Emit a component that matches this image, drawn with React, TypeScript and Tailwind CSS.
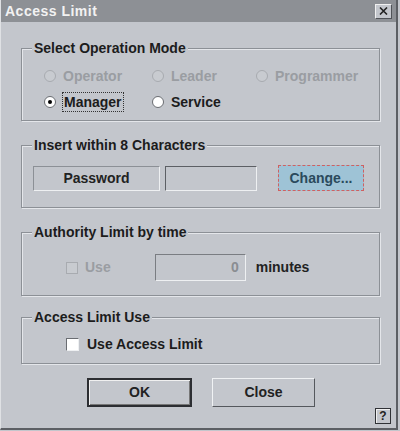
import React from 'react'

const font = { fontFamily: '"Liberation Sans", Arial, sans-serif' }

function Group({ title, className, children }: { title: string; className?: string; children: React.ReactNode }) {
  return (
    <div className={`relative border border-[#8c9096] shadow-[1px_1px_0_#e4e6ea,inset_1px_1px_0_#e4e6ea] ${className ?? ''}`}>
      <span className="absolute -top-[10px] left-[10px] bg-[#c3c6cc] px-[2px] text-[14px] font-bold leading-[18px] text-[#1c1c1c]">
        {title}
      </span>
      {children}
    </div>
  )
}

function Radio({ label, checked, disabled, focus }: { label: string; checked?: boolean; disabled?: boolean; focus?: boolean }) {
  return (
    <div className="flex items-center gap-[7px]">
      <span
        className={`flex h-[12px] w-[12px] items-center justify-center rounded-full border ${
          disabled ? 'border-[#a8abb0] bg-[#c8cbd0]' : 'border-[#6a6d72] bg-white'
        }`}
      >
        {checked && <span className="h-[4px] w-[4px] rounded-full bg-black" />}
      </span>
      <span
        className={`text-[14px] font-bold leading-[18px] ${disabled ? 'text-[#9a9da2]' : 'text-[#1c1c1c]'} ${
          focus ? 'outline-1 outline-dotted outline-[#333] px-[1px]' : ''
        }`}
      >
        {label}
      </span>
    </div>
  )
}

export default function App() {
  return (
    <div style={font} className="flex h-[431px] w-[400px] flex-col bg-[#c3c6cc]">
      <div className="flex h-[430px] w-[398px] flex-col border-r-2 border-b-2 border-l border-[#5c5f64] border-l-[#dfe1e4]">
        <div className="flex h-[22px] items-center justify-between bg-[#8d9095] pl-[4px] pr-[4px]">
          <span className="text-[14px] font-bold tracking-[0.5px] text-[#f2f2f2]">Access Limit</span>
          <span className="flex h-[15px] w-[17px] items-center justify-center border border-[#f0f0f0] border-r-[#505358] border-b-[#505358] bg-[#c3c6cc]">
            <svg width="9" height="8" viewBox="0 0 9 8">
              <path d="M1 0.5 L8 7.5 M8 0.5 L1 7.5" stroke="#222" strokeWidth="1.6" />
            </svg>
          </span>
        </div>

        <div className="flex flex-1 flex-col px-[20px] pt-[26px]">
          <Group title="Select Operation Mode" className="h-[73px] w-[359px]">
            <div className="grid grid-cols-[108px_104px_1fr] gap-y-[8px] pl-[22px] pt-[18px]">
              <Radio label="Operator" disabled />
              <Radio label="Leader" disabled />
              <Radio label="Programmer" disabled />
              <Radio label="Manager" checked focus />
              <Radio label="Service" />
            </div>
          </Group>

          <Group title="Insert within 8 Characters" className="mt-[24px] h-[63px] w-[359px]">
            <div className="flex items-center pl-[11px] pt-[19px]">
              <div className="flex h-[25px] w-[127px] items-center justify-center border border-[#8c9096] border-r-[#eef0f2] border-b-[#eef0f2] text-[14px] font-bold text-[#222]">
                Password
              </div>
              <div className="ml-[5px] h-[25px] w-[92px] border border-[#5c5f64] border-r-[#eef0f2] border-b-[#eef0f2] bg-[#c3c6cc]" />
              <button className="ml-[21px] flex h-[26px] w-[86px] items-center justify-center border border-dashed border-[#d06060] bg-[#9ec3d6] text-[14px] font-bold text-[#2a4a5c]">
                Change...
              </button>
            </div>
          </Group>

          <Group title="Authority Limit by time" className="mt-[24px] h-[64px] w-[359px]">
            <div className="flex items-center pl-[44px] pt-[21px]">
              <span className="h-[12px] w-[12px] border border-[#a8abb0] bg-[#c8cbd0]" />
              <span className="ml-[7px] text-[14px] font-bold text-[#9a9da2]">Use</span>
              <div className="ml-[44px] flex h-[27px] w-[91px] items-center justify-end border border-[#7a7d82] border-r-[#eef0f2] border-b-[#eef0f2] pr-[6px] text-[14px] font-bold text-[#8a8d92]">
                0
              </div>
              <span className="ml-[10px] text-[14px] font-bold text-[#222]">minutes</span>
            </div>
          </Group>

          <Group title="Access Limit Use" className="mt-[21px] h-[47px] w-[359px]">
            <div className="flex items-center pl-[44px] pt-[16px]">
              <span className="h-[13px] w-[13px] border border-[#6a6d72] border-r-[#eef0f2] border-b-[#eef0f2] bg-white" />
              <span className="ml-[8px] text-[14px] font-bold text-[#1c1c1c]">Use Access Limit</span>
            </div>
          </Group>

          <div className="mt-[14px] flex pl-[66px]">
            <button className="flex h-[29px] w-[105px] items-center justify-center border-2 border-[#2c2e32] bg-[#c3c6cc] text-[14px] font-bold text-[#222] shadow-[inset_1px_1px_0_#f0f0f0,inset_-1px_-1px_0_#777]">
              OK
            </button>
            <button className="ml-[20px] flex h-[29px] w-[103px] items-center justify-center border border-[#f0f2f4] border-r-[#55585d] border-b-[#55585d] bg-[#c3c6cc] text-[14px] font-bold text-[#222]">
              Close
            </button>
          </div>

          <div className="-mr-[15px] mt-[1px] flex justify-end">
            <span className="flex h-[16px] w-[16px] items-center justify-center border border-[#303236] bg-[#c3c6cc] text-[12px] font-bold leading-none text-[#222] shadow-[inset_1px_1px_0_#f0f0f0]">
              ?
            </span>
          </div>
        </div>
      </div>
    </div>
  )
}
